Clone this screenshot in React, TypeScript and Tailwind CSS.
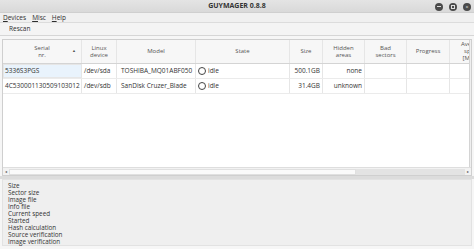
import React from "react";

const cols = [79, 35, 79, 94, 33, 42, 42, 43, 40];

function Cell({ w, children, className = "" }: { w: number; children?: React.ReactNode; className?: string }) {
  return (
    <div className={"shrink-0 h-full flex items-center border-r border-[#e6e6e6] overflow-hidden whitespace-nowrap " + className} style={{ width: w }}>
      {children}
    </div>
  );
}

function Circle() {
  return <span className="inline-block w-[8px] h-[8px] rounded-full border border-[#444] mr-[2px] ml-[2px]" />;
}

export default function App() {
  const font = { fontFamily: '"Open Sans", "Noto Sans", sans-serif' };
  const headers: React.ReactNode[] = [
    <div className="relative w-full text-center leading-[7px]">Serial<br />nr.<span className="absolute right-[5px] top-[2px] text-[4px]">▲</span></div>,
    <div className="w-full text-center leading-[7px]">Linux<br />device</div>,
    <div className="w-full text-center">Model</div>,
    <div className="w-full text-center">State</div>,
    <div className="w-full text-center">Size</div>,
    <div className="w-full text-center leading-[7px]">Hidden<br />areas</div>,
    <div className="w-full text-center leading-[7px]">Bad<br />sectors</div>,
    <div className="w-full text-center">Progress</div>,
    <div className="w-full text-left pl-[11px] leading-[7px]">Ave<br />&nbsp;&nbsp;sp<br />&nbsp;[M</div>,
  ];
  const rows = [
    ["5336S3PGS", "/dev/sda", "TOSHIBA_MQ01ABF050", "idle", "500.1GB", "none"],
    ["4C530001130509103012", "/dev/sdb", "SanDisk Cruzer_Blade", "idle", "31.4GB", "unknown"],
  ];
  const info = ["Size", "Sector size", "Image file", "Info file", "Current speed", "Started", "Hash calculation", "Source verification", "Image verification"];
  return (
    <div className="w-[474px] h-[249px] bg-[#f6f6f6] overflow-hidden flex flex-col text-[#2e2e2e]" style={font}>
      {/* title */}
      <div className="h-[13px] shrink-0 relative flex items-center justify-center bg-gradient-to-b from-[#e4e4e4] to-[#d9d9d9] border-b border-[#cfcfcf]">
        <span className="text-[7px] font-bold text-[#333]">GUYMAGER 0.8.8</span>
        <div className="absolute right-[3px] top-[2.5px] flex gap-[6px]">
          {[0, 1, 2].map((i) => (
            <span key={i} className="w-[8px] h-[8px] rounded-full bg-[#4a4a4a] flex items-center justify-center">
              {i === 0 && <span className="w-[4px] h-[1px] bg-[#ddd]" />}
              {i === 1 && <span className="w-[4px] h-[4px] border border-[#ddd]" />}
              {i === 2 && <span className="text-[6px] leading-none text-[#ddd]">×</span>}
            </span>
          ))}
        </div>
      </div>
      {/* menu */}
      <div className="h-[10px] shrink-0 flex items-center bg-[#f0f0f0] border-b border-[#dcdcdc] text-[6.5px] pl-[3px] gap-[6px]">
        <span><u>D</u>evices</span>
        <span><u>M</u>isc</span>
        <span><u>H</u>elp</span>
      </div>
      {/* toolbar */}
      <div className="h-[13px] shrink-0 flex items-center bg-[#f4f4f4] border-b border-[#d6d6d6] text-[6.5px] pl-[9px]">
        Rescan
      </div>
      {/* table */}
      <div className="mt-[3px] mx-[2px] h-[137px] shrink-0 bg-white border border-[#cfcfcf] flex flex-col overflow-hidden">
        <div className="flex-1 flex overflow-hidden">
          <div className="flex-1 overflow-hidden flex flex-col">
            <div className="h-[24px] shrink-0 flex bg-[#f7f7f7] border-b border-[#d4d4d4] text-[6px] text-[#555]">
              {headers.map((h, i) => (
                <Cell key={i} w={cols[i]} className="border-[#d4d4d4]">{h}</Cell>
              ))}
            </div>
            {rows.map((r, ri) => (
              <div key={ri} className="h-[15px] shrink-0 flex border-b border-[#ebebeb] text-[6.5px] text-[#333]">
                <Cell w={cols[0]} className={ri === 0 ? "bg-[#e9f3fc] border border-[#b9d3ee] pl-[1px]" : "pl-[2px]"}>{r[0]}</Cell>
                <Cell w={cols[1]} className="pl-[2px]">{r[1]}</Cell>
                <Cell w={cols[2]} className="pl-[4px]">{r[2]}</Cell>
                <Cell w={cols[3]}><Circle />{r[3]}</Cell>
                <Cell w={cols[4]} className="justify-end pr-[2px]">{r[4]}</Cell>
                <Cell w={cols[5]} className="justify-end pr-[2px]">{r[5]}</Cell>
                <Cell w={cols[6]} />
                <Cell w={cols[7]} />
                <Cell w={cols[8]} />
              </div>
            ))}
          </div>
          <div className="w-[2px] shrink-0 border-l border-[#d4d4d4] bg-[#efefef]" />
        </div>
        {/* hscrollbar */}
        <div className="h-[8px] shrink-0 flex items-center bg-[#f2f2f2] border-t border-[#dedede]">
          <span className="w-[6px] text-[4px] text-[#555] text-center">◂</span>
          <div className="w-[347px] h-[6px] bg-[#fafafa] border border-[#e0e0e0]" />
          <div className="flex-1 h-[6px] bg-[#e3e3e3]" />
          <span className="w-[6px] text-[4px] text-[#555] text-center">▸</span>
        </div>
      </div>
      {/* splitter */}
      <div className="h-[3px] shrink-0 bg-[#dcdcdc]" />
      {/* info */}
      <div className="mx-[2px] h-[67px] shrink-0 bg-[#efefef] border border-[#e2e2e2] pl-[5px] pt-[2px] text-[6.3px] leading-[7px] text-[#333]">
        {info.map((t) => (
          <div key={t}>{t}</div>
        ))}
      </div>
    </div>
  );
}
